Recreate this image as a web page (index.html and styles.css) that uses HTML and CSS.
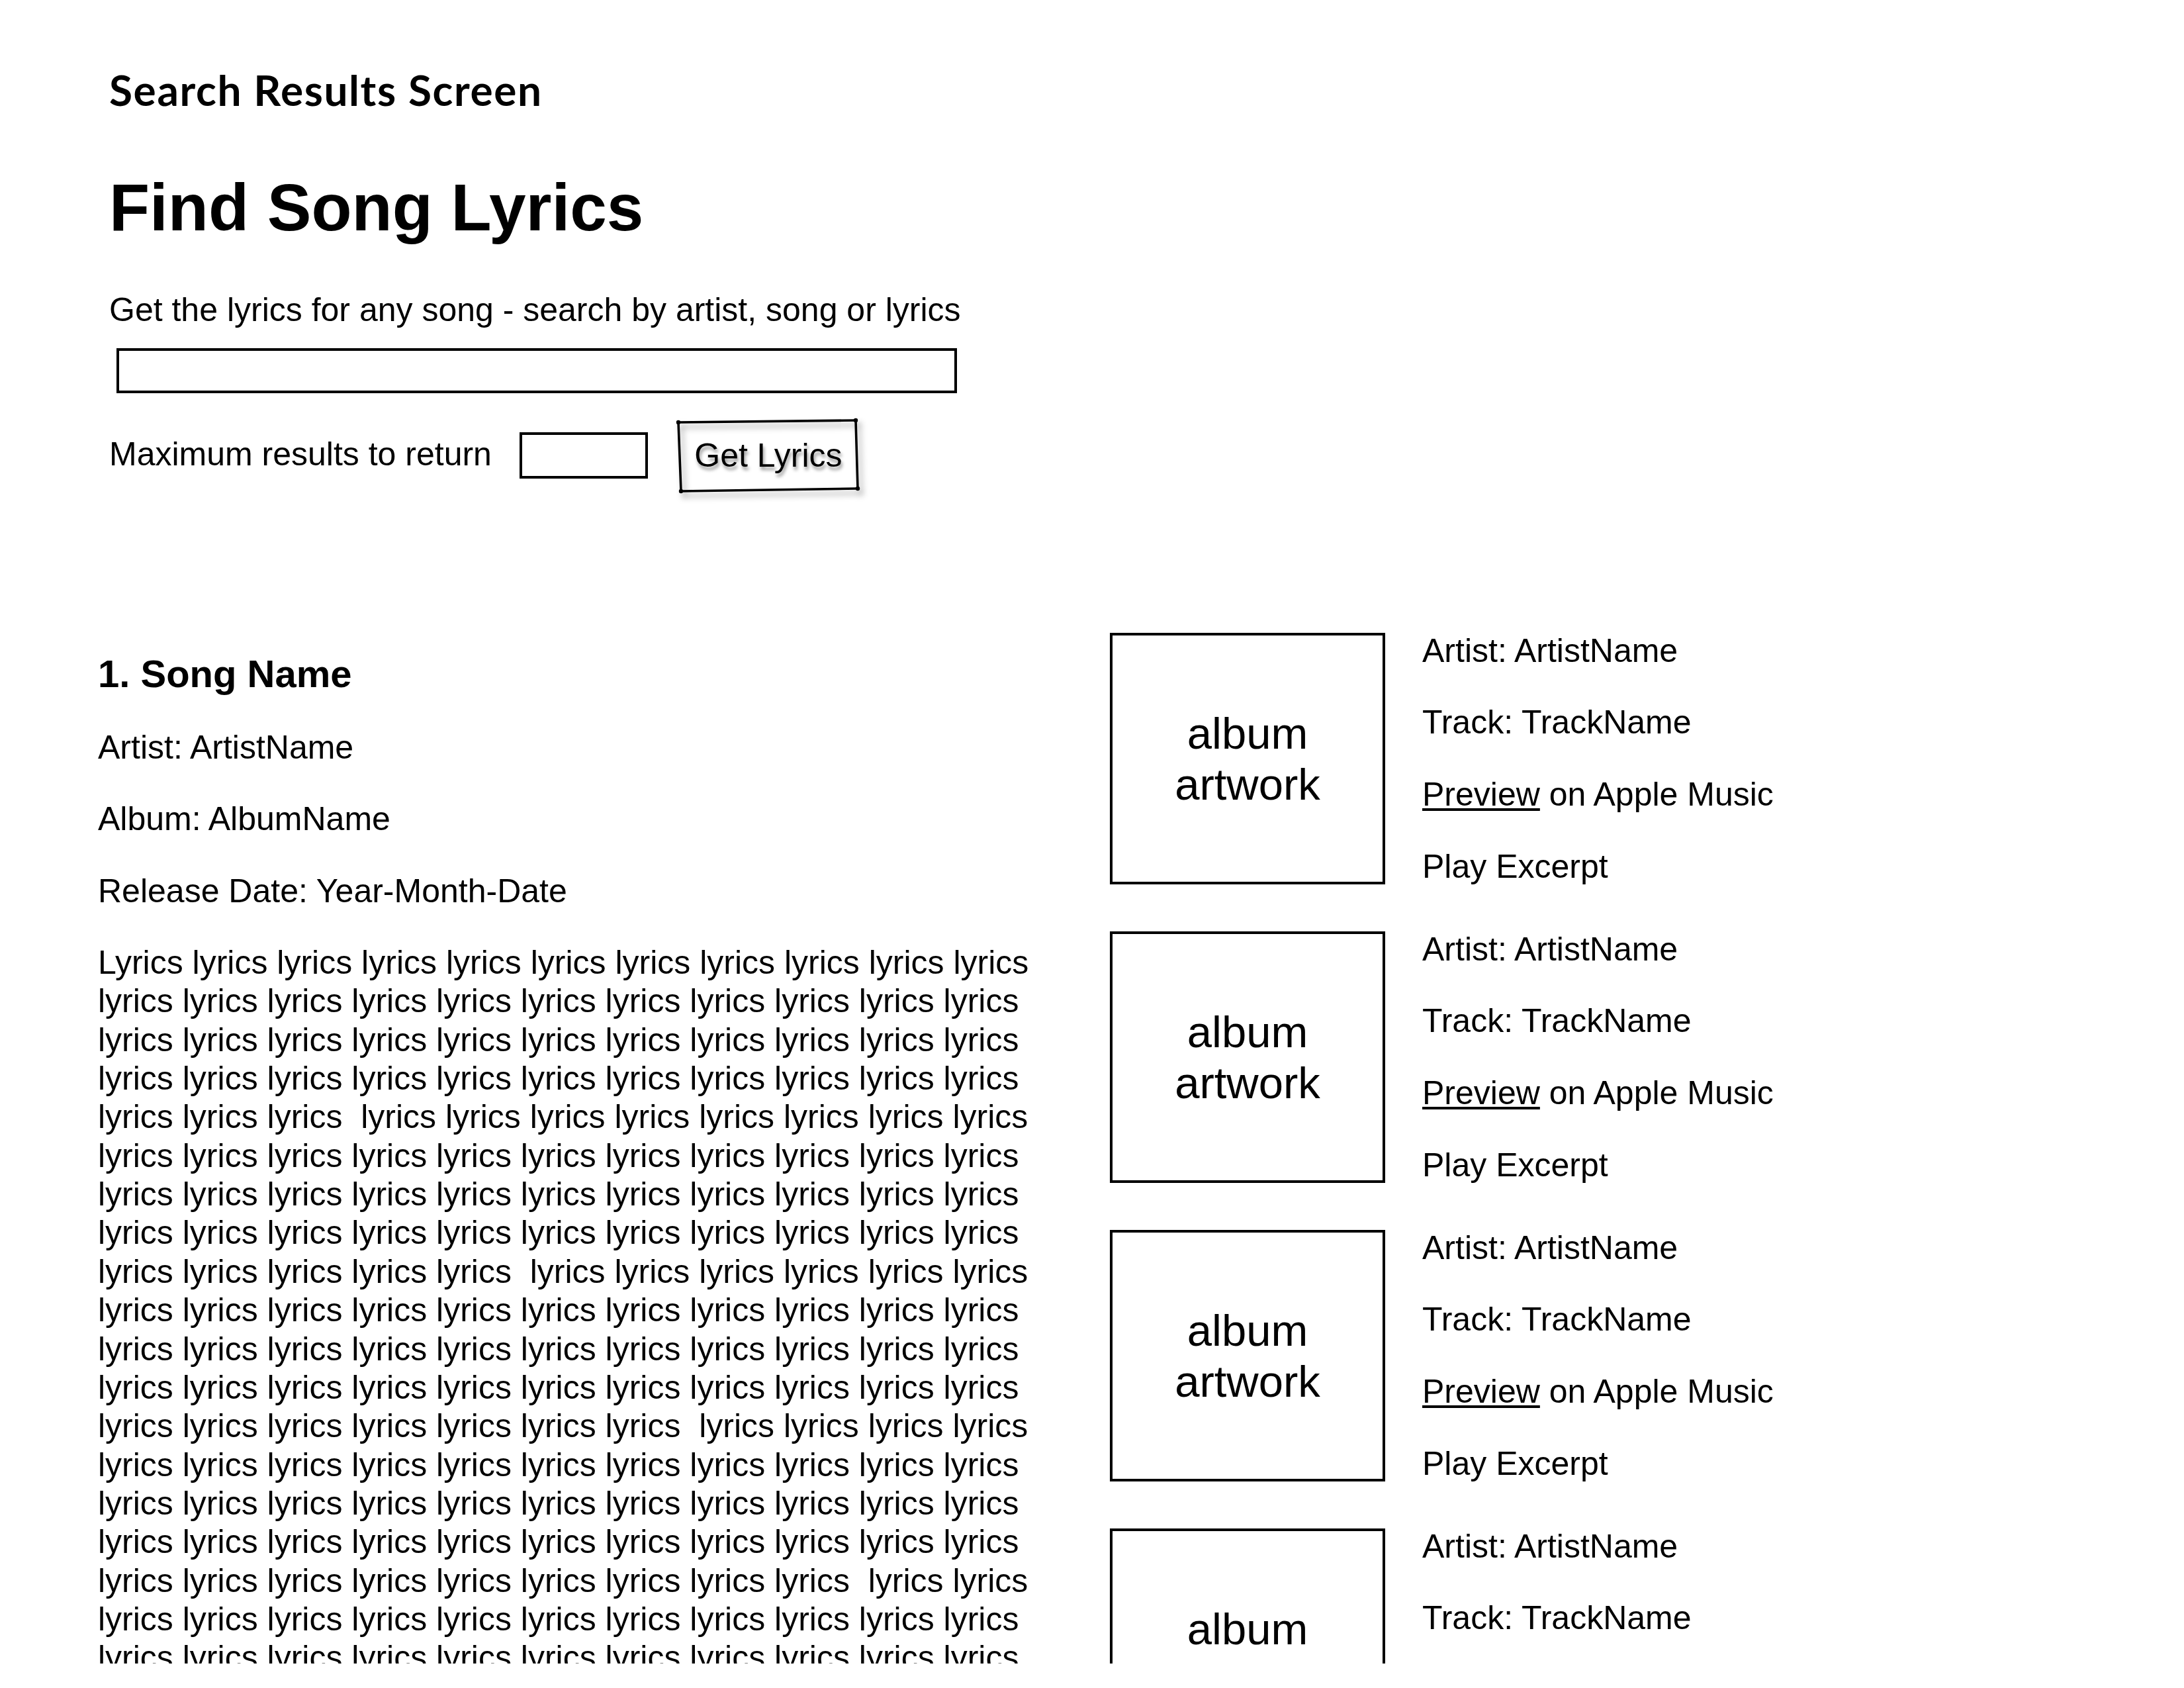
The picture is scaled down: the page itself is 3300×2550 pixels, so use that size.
FILE: index.html
```
<!DOCTYPE html>
<html lang="en">
<head>
<meta charset="utf-8">
<title>Search Results Screen</title>
<link rel="stylesheet" href="styles.css">
</head>
<body>
<div class="page">
  <header class="search">
    <div class="screen-label">Search Results Screen</div>
    <h1 class="title">Find Song Lyrics</h1>
    <p class="intro">Get the lyrics for any song - search by artist, song or lyrics</p>
    <input class="query" type="text" aria-label="Search">
    <div class="options">
      <label class="max-label" for="max">Maximum results to return</label>
      <input class="max-input" id="max" type="text">
      <button class="get-btn" type="button">
        <svg class="btn-sketch" viewBox="0 0 278 112" aria-hidden="true">
          <g fill="none" stroke="#000" stroke-width="3.6" stroke-linecap="round">
            <path d="M3 6 L271 3"/>
            <path d="M3 6 L7 110"/>
            <path d="M7 110 L274 106"/>
            <path d="M271 3 L274 106"/>
          </g>
          <g fill="#000">
            <circle cx="3" cy="6" r="3.2"/>
            <circle cx="271" cy="3" r="3.2"/>
            <circle cx="7" cy="110" r="3.2"/>
            <circle cx="274" cy="106" r="3.2"/>
          </g>
        </svg>
        <span class="btn-text">Get Lyrics</span>
      </button>
    </div>
  </header>

  <main class="results">
    <section class="song">
      <h2 class="song-title">1. Song Name</h2>
      <p class="meta first">Artist: ArtistName</p>
      <p class="meta">Album: AlbumName</p>
      <p class="meta">Release Date: Year-Month-Date</p>
      <div class="lyrics">
        <span class="lyric-line">Lyrics lyrics lyrics lyrics lyrics lyrics lyrics lyrics lyrics lyrics lyrics</span>
        <span class="lyric-line">lyrics lyrics lyrics lyrics lyrics lyrics lyrics lyrics lyrics lyrics lyrics</span>
        <span class="lyric-line">lyrics lyrics lyrics lyrics lyrics lyrics lyrics lyrics lyrics lyrics lyrics</span>
        <span class="lyric-line">lyrics lyrics lyrics lyrics lyrics lyrics lyrics lyrics lyrics lyrics lyrics</span>
        <span class="lyric-line">lyrics lyrics lyrics  lyrics lyrics lyrics lyrics lyrics lyrics lyrics lyrics</span>
        <span class="lyric-line">lyrics lyrics lyrics lyrics lyrics lyrics lyrics lyrics lyrics lyrics lyrics</span>
        <span class="lyric-line">lyrics lyrics lyrics lyrics lyrics lyrics lyrics lyrics lyrics lyrics lyrics</span>
        <span class="lyric-line">lyrics lyrics lyrics lyrics lyrics lyrics lyrics lyrics lyrics lyrics lyrics</span>
        <span class="lyric-line">lyrics lyrics lyrics lyrics lyrics  lyrics lyrics lyrics lyrics lyrics lyrics</span>
        <span class="lyric-line">lyrics lyrics lyrics lyrics lyrics lyrics lyrics lyrics lyrics lyrics lyrics</span>
        <span class="lyric-line">lyrics lyrics lyrics lyrics lyrics lyrics lyrics lyrics lyrics lyrics lyrics</span>
        <span class="lyric-line">lyrics lyrics lyrics lyrics lyrics lyrics lyrics lyrics lyrics lyrics lyrics</span>
        <span class="lyric-line">lyrics lyrics lyrics lyrics lyrics lyrics lyrics  lyrics lyrics lyrics lyrics</span>
        <span class="lyric-line">lyrics lyrics lyrics lyrics lyrics lyrics lyrics lyrics lyrics lyrics lyrics</span>
        <span class="lyric-line">lyrics lyrics lyrics lyrics lyrics lyrics lyrics lyrics lyrics lyrics lyrics</span>
        <span class="lyric-line">lyrics lyrics lyrics lyrics lyrics lyrics lyrics lyrics lyrics lyrics lyrics</span>
        <span class="lyric-line">lyrics lyrics lyrics lyrics lyrics lyrics lyrics lyrics lyrics  lyrics lyrics</span>
        <span class="lyric-line">lyrics lyrics lyrics lyrics lyrics lyrics lyrics lyrics lyrics lyrics lyrics</span>
        <span class="lyric-line">lyrics lyrics lyrics lyrics lyrics lyrics lyrics lyrics lyrics lyrics lyrics</span>
      </div>
    </section>

    <section class="tracks">
      <article class="track">
        <div class="artwork">album<br>artwork</div>
        <div class="track-info">
          <p>Artist: ArtistName</p>
          <p>Track: TrackName</p>
          <p><a href="#" class="preview">Preview</a> on Apple Music</p>
          <p>Play Excerpt</p>
        </div>
      </article>
      <article class="track">
        <div class="artwork">album<br>artwork</div>
        <div class="track-info">
          <p>Artist: ArtistName</p>
          <p>Track: TrackName</p>
          <p><a href="#" class="preview">Preview</a> on Apple Music</p>
          <p>Play Excerpt</p>
        </div>
      </article>
      <article class="track">
        <div class="artwork">album<br>artwork</div>
        <div class="track-info">
          <p>Artist: ArtistName</p>
          <p>Track: TrackName</p>
          <p><a href="#" class="preview">Preview</a> on Apple Music</p>
          <p>Play Excerpt</p>
        </div>
      </article>
      <article class="track">
        <div class="artwork">album<br>artwork</div>
        <div class="track-info">
          <p>Artist: ArtistName</p>
          <p>Track: TrackName</p>
          <p><a href="#" class="preview">Preview</a> on Apple Music</p>
          <p>Play Excerpt</p>
        </div>
      </article>
    </section>
  </main>
</div>
</body>
</html>
```
FILE: styles.css
```
html,
body {
  margin: 0;
  background: #fff;
}

body {
  font-family: "Liberation Sans", Arial, sans-serif;
  color: #000;
}

.page {
  height: 2513px;
  overflow: hidden;
}

/* ---------- search header ---------- */
.search {
  padding: 96px 0 0 165px;
}

.screen-label {
  font-family: Lato, "Open Sans", sans-serif;
  font-weight: 700;
  font-size: 64px;
  line-height: 80px;
  letter-spacing: 1.6px;
}

.title {
  margin: 77.4px 0 0;
  font-size: 100px;
  line-height: 120px;
  font-weight: 700;
}

.intro {
  margin: 64.3px 0 0;
  font-size: 50px;
  line-height: 60px;
}

.query {
  display: block;
  margin: 28.3px 0 0 11px;
  width: 1270px;
  height: 68px;
  box-sizing: border-box;
  border: 4px solid #000;
  padding: 0;
  background: #fff;
  outline: none;
}

.options {
  display: flex;
  align-items: center;
  margin-top: 38.5px;
  height: 112px;
}

.max-label {
  font-size: 50px;
  line-height: 60px;
  margin-bottom: 5px;
}

.max-input {
  margin-left: 42px;
  width: 194px;
  height: 70px;
  box-sizing: border-box;
  border: 4px solid #000;
  padding: 0;
  background: #fff;
  outline: none;
}

.get-btn {
  position: relative;
  margin-left: 43px;
  width: 278px;
  height: 112px;
  border: 0;
  padding: 0;
  background: transparent;
  font-family: "Liberation Sans", Arial, sans-serif;
  font-size: 50px;
  line-height: 60px;
  color: #000;
  display: flex;
  align-items: center;
  justify-content: center;
}

.btn-sketch {
  position: absolute;
  left: 0;
  top: 0;
  width: 100%;
  height: 100%;
  overflow: visible;
  filter: drop-shadow(5px 7px 5px rgba(0, 0, 0, 0.35));
}

.btn-text {
  position: relative;
  text-shadow: 2px 5px 5px rgba(0, 0, 0, 0.4);
}

/* ---------- results ---------- */
.results {
  display: flex;
  margin-top: 211.5px;
  padding-left: 148px;
}

.song {
  width: 1529px;
  flex-shrink: 0;
  padding-top: 27px;
}

.song-title {
  margin: 0;
  font-size: 58px;
  line-height: 70px;
  font-weight: 700;
}

.meta {
  margin: 0 0 48.8px;
  font-size: 50px;
  line-height: 60px;
}

.meta.first {
  margin-top: 45.7px;
}

.lyrics {
  font-size: 50px;
  line-height: 58.35px;
}

.lyric-line {
  display: block;
  white-space: pre;
}

.tracks {
  display: flex;
  flex-direction: column;
  gap: 71px;
}

.track {
  display: flex;
  align-items: flex-start;
  height: 380px;
}

.artwork {
  flex-shrink: 0;
  width: 416px;
  height: 380px;
  box-sizing: border-box;
  border: 4px solid #000;
  display: flex;
  align-items: center;
  justify-content: center;
  text-align: center;
  font-size: 67px;
  line-height: 77px;
}

.track-info {
  margin: -3.3px 0 0 56px;
}

.track-info p {
  margin: 0 0 48.8px;
  font-size: 50px;
  line-height: 60px;
  white-space: nowrap;
}

.preview {
  color: #000;
  text-decoration: underline;
  text-decoration-thickness: 4px;
  text-underline-offset: 4px;
}
```
